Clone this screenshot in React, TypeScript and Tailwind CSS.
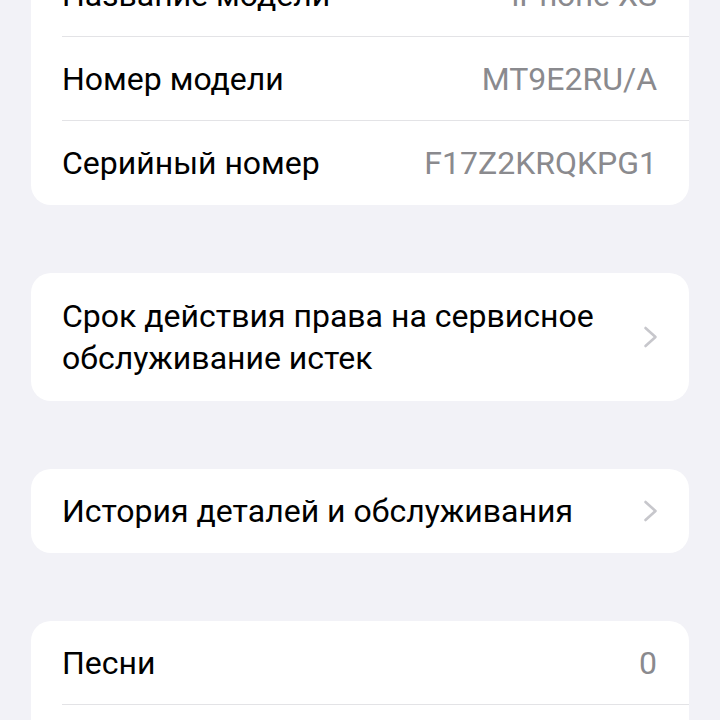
const font = "font-['Roboto','Liberation_Sans',sans-serif]";

type Row = { label: string; value?: string };

const Chevron = () => (
  <svg width="15" height="22" viewBox="0 0 15 22" fill="none" className="shrink-0">
    <path d="M2.5 2 L12.5 11 L2.5 20" stroke="#c7c7cc" strokeWidth="2.6" strokeLinecap="round" strokeLinejoin="round" />
  </svg>
);

const InfoCard = ({ rows }: { rows: Row[] }) => (
  <div className="bg-white rounded-[20px] pl-[31px]">
    {rows.map((r, i) => (
      <div
        key={r.label}
        className={`flex items-center justify-between h-[84px] pr-[32px] ${
          i < rows.length - 1 ? "border-b border-[#e3e3e6]" : ""
        }`}
      >
        <span className="text-black">{r.label}</span>
        <span className="text-[#8a8a8e]">{r.value}</span>
      </div>
    ))}
  </div>
);

const LinkCard = ({ lines, tall }: { lines: string[]; tall?: boolean }) => (
  <div
    className={`bg-white rounded-[20px] pl-[31px] pr-[31px] flex items-center justify-between ${
      tall ? "py-[22px]" : "py-[21px]"
    }`}
  >
    <div className="leading-[42px] text-black">
      {lines.map((l) => (
        <div key={l}>{l}</div>
      ))}
    </div>
    <Chevron />
  </div>
);

export default function App() {
  return (
    <div className={`h-[720px] w-[720px] overflow-hidden bg-[#f2f2f7] ${font} text-[32px]`}>
      <div className="flex flex-col gap-[68px] px-[31px] -mt-[47px]">
        <InfoCard
          rows={[
            { label: "Название модели", value: "iPhone XS" },
            { label: "Номер модели", value: "MT9E2RU/A" },
            { label: "Серийный номер", value: "F17Z2KRQKPG1" },
          ]}
        />
        <LinkCard tall lines={["Срок действия права на сервисное", "обслуживание истек"]} />
        <LinkCard lines={["История деталей и обслуживания"]} />
        <InfoCard
          rows={[
            { label: "Песни", value: "0" },
            { label: "Видео", value: "0" },
          ]}
        />
      </div>
    </div>
  );
}
